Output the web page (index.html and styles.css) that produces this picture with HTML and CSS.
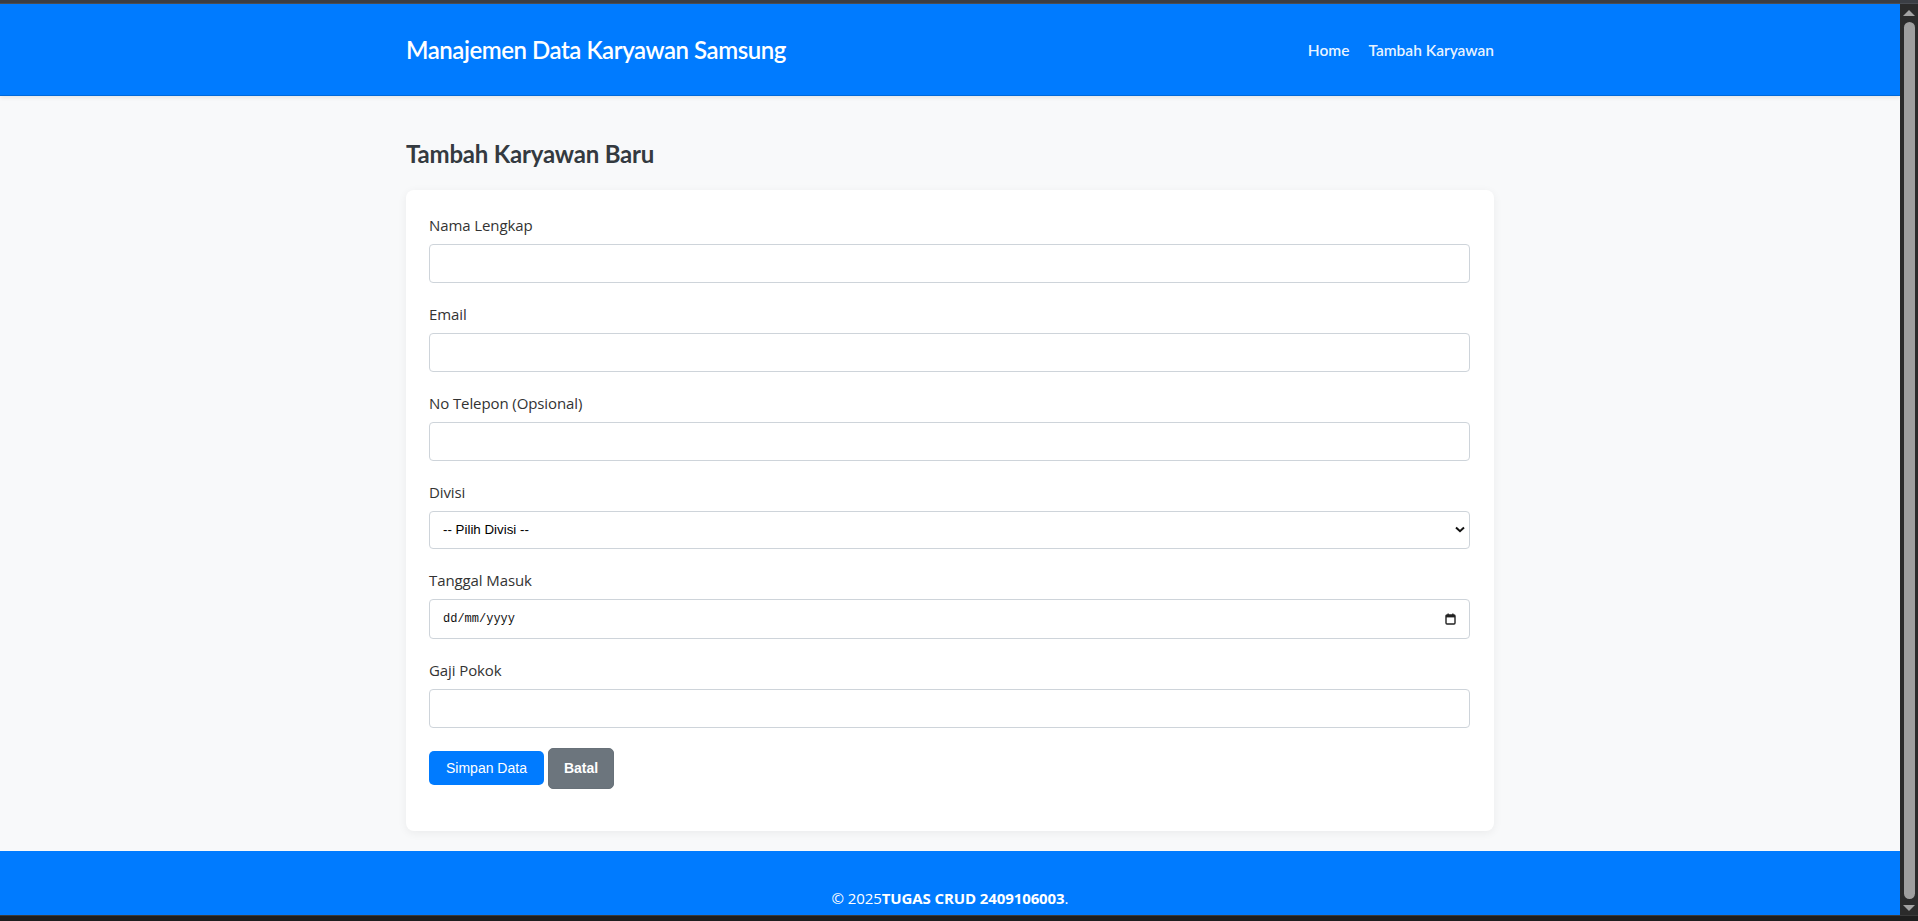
FILE: index.html
```html
<!DOCTYPE html>
<html lang="id">
<head>
<meta charset="utf-8">
<title>Tambah Karyawan - Manajemen Data Karyawan Samsung</title>
<link rel="stylesheet" href="styles.css">
</head>
<body>
<div class="frame">
  <div class="frame-top"></div>
  <div class="frame-mid">
    <div class="viewport">
      <header class="site-header">
        <div class="container header-inner">
          <a class="brand" href="#">Manajemen Data Karyawan Samsung</a>
          <nav class="nav">
            <a href="#">Home</a>
            <a href="#">Tambah Karyawan</a>
          </nav>
        </div>
      </header>
      <main class="container main">
        <h2 class="page-title">Tambah Karyawan Baru</h2>
        <div class="card">
          <form class="form">
            <div class="field">
              <label for="nama">Nama Lengkap</label>
              <input id="nama" type="text" class="control">
            </div>
            <div class="field">
              <label for="email">Email</label>
              <input id="email" type="email" class="control">
            </div>
            <div class="field">
              <label for="telp">No Telepon (Opsional)</label>
              <input id="telp" type="text" class="control">
            </div>
            <div class="field">
              <label for="divisi">Divisi</label>
              <div class="select-wrap">
                <select id="divisi" class="control select">
                  <option>-- Pilih Divisi --</option>
                </select>
                <svg class="chevron" width="10" height="7" viewBox="0 0 10 7"><path d="M1 1.5 L5 5.2 L9 1.5" fill="none" stroke="#111" stroke-width="2"/></svg>
              </div>
            </div>
            <div class="field">
              <label for="tgl">Tanggal Masuk</label>
              <div class="date-wrap">
                <input id="tgl" type="text" class="control date" placeholder="dd/mm/yyyy">
                <svg class="cal" width="11" height="12" viewBox="0 0 11 12"><rect x="1" y="2" width="9" height="9" rx="1" fill="none" stroke="#222" stroke-width="1.4"/><rect x="1" y="2" width="9" height="2.4" fill="#222"/><rect x="2.5" y="0.5" width="1.3" height="2" fill="#222"/><rect x="7.2" y="0.5" width="1.3" height="2" fill="#222"/></svg>
              </div>
            </div>
            <div class="field">
              <label for="gaji">Gaji Pokok</label>
              <input id="gaji" type="text" class="control">
            </div>
            <div class="actions">
              <button type="submit" class="btn btn-primary">Simpan Data</button>
              <a href="#" class="btn btn-secondary">Batal</a>
            </div>
          </form>
        </div>
      </main>
      <footer class="site-footer">
        <p>&copy; 2025<strong>TUGAS CRUD 2409106003</strong>.</p>
      </footer>
    </div>
    <div class="scrollbar">
      <span class="sb-up"></span>
      <span class="sb-thumb"></span>
      <span class="sb-down"></span>
    </div>
  </div>
  <div class="frame-bottom"></div>
</div>
</body>
</html>
```

FILE: styles.css
```css
* { box-sizing: border-box; }

html, body {
  margin: 0;
  padding: 0;
  height: 921px;
  overflow: hidden;
}

body {
  font-family: "Open Sans", "Noto Sans", sans-serif;
  color: #333;
  background: #1f1f1f;
}

.frame {
  height: 921px;
  display: grid;
  grid-template-rows: 4px 1fr 6px;
}

.frame-top {
  background: #3b3e44;
  border-bottom: 1px solid #4a4d53;
}

.frame-bottom {
  background: #1e1e1e;
  border-top: 1px solid #3a3a3a;
}

.frame-mid {
  display: grid;
  grid-template-columns: 1fr 18px;
  min-height: 0;
}

.viewport {
  background: #f8f9fa;
  overflow: hidden;
  display: flex;
  flex-direction: column;
  min-height: 0;
}

.container {
  width: 1088px;
  margin: 0 auto;
}

/* Header */
.site-header {
  background: #007bff;
  height: 92px;
  flex: none;
  border-bottom: 1px solid #0069d9;
  box-shadow: 0 2px 4px rgba(0, 0, 0, 0.08);
  display: flex;
  align-items: center;
}

.header-inner {
  display: flex;
  justify-content: space-between;
  align-items: center;
}

.brand {
  color: #fff;
  text-decoration: none;
  font-family: "Lato", "Open Sans", sans-serif;
  font-size: 24px;
  font-weight: 600;
  letter-spacing: -0.45px;
}

.nav {
  display: flex;
  gap: 19px;
}

.nav a {
  color: rgba(255, 255, 255, 0.93);
  text-decoration: none;
  font-family: "Lato", "Open Sans", sans-serif;
  font-size: 15.5px;
  font-weight: 600;
}

/* Main */
.main {
  padding-top: 44px;
  flex: none;
}

.page-title {
  margin: 0 0 21px;
  font-family: "Lato", "Open Sans", sans-serif;
  font-size: 24px;
  line-height: 1.2;
  font-weight: 700;
  color: #343a40;
  letter-spacing: -0.2px;
}

.card {
  background: #fff;
  border-radius: 8px;
  box-shadow: 0 2px 10px rgba(0, 0, 0, 0.06);
  padding: 24px 24px 42px 23px;
}

.form {
  display: flex;
  flex-direction: column;
}

.field {
  display: flex;
  flex-direction: column;
  margin-bottom: 20px;
}

.field label {
  font-size: 15px;
  line-height: 22px;
  font-weight: 500;
  color: #333;
  margin-bottom: 8px;
  letter-spacing: -0.1px;
}

.control {
  width: 100%;
  height: 39px;
  border: 1px solid #ced4da;
  border-radius: 4px;
  background: #fff;
  padding: 0 12px;
  font-family: "Liberation Sans", Arial, sans-serif;
  font-size: 13.33px;
  color: #111;
  outline: none;
}

.select-wrap,
.date-wrap {
  position: relative;
}

.select {
  appearance: none;
  -webkit-appearance: none;
  height: 38px;
  padding-left: 13px;
  color: #000;
}

.chevron {
  position: absolute;
  right: 5px;
  top: 15px;
  pointer-events: none;
}

.date {
  height: 40px;
  font-family: "Liberation Mono", monospace;
  font-size: 12px;
  padding-left: 13px;
}

.date::placeholder {
  color: #111;
  opacity: 1;
}

.cal {
  position: absolute;
  right: 14px;
  top: 14px;
  pointer-events: none;
}

.actions {
  display: flex;
  align-items: center;
  gap: 4px;
}

.btn {
  display: inline-flex;
  align-items: center;
  justify-content: center;
  border-radius: 5px;
  color: #fff;
  text-decoration: none;
  font-family: "Liberation Sans", Arial, sans-serif;
  font-size: 14px;
  border: 1px solid transparent;
}

.btn-primary {
  background: #007bff;
  height: 34px;
  padding: 0 16px;
}

.btn-secondary {
  background: #6c757d;
  border-color: #687179;
  height: 41px;
  padding: 0 15px;
  font-weight: 700;
}

/* Footer */
.site-footer {
  margin-top: 20px;
  background: #007bff;
  color: #fff;
  flex: 1 0 auto;
  text-align: center;
  padding-top: 35px;
}

.site-footer p {
  margin: 0;
  font-size: 15px;
  line-height: 24px;
  letter-spacing: -0.1px;
}

.site-footer strong {
  font-weight: 700;
}

/* Scrollbar */
.scrollbar {
  background: #2b2b2b;
  display: flex;
  flex-direction: column;
  align-items: center;
  padding: 6px 0 4px;
}

.sb-up,
.sb-down {
  width: 0;
  height: 0;
  border-left: 6px solid transparent;
  border-right: 6px solid transparent;
  flex: none;
}

.sb-up {
  border-bottom: 6px solid #a3a3a3;
}

.sb-down {
  border-top: 6px solid #a3a3a3;
}

.sb-thumb {
  flex: 1;
  width: 11px;
  margin: 6px 0;
  background: #9f9f9f;
  border-radius: 6px;
}
```
